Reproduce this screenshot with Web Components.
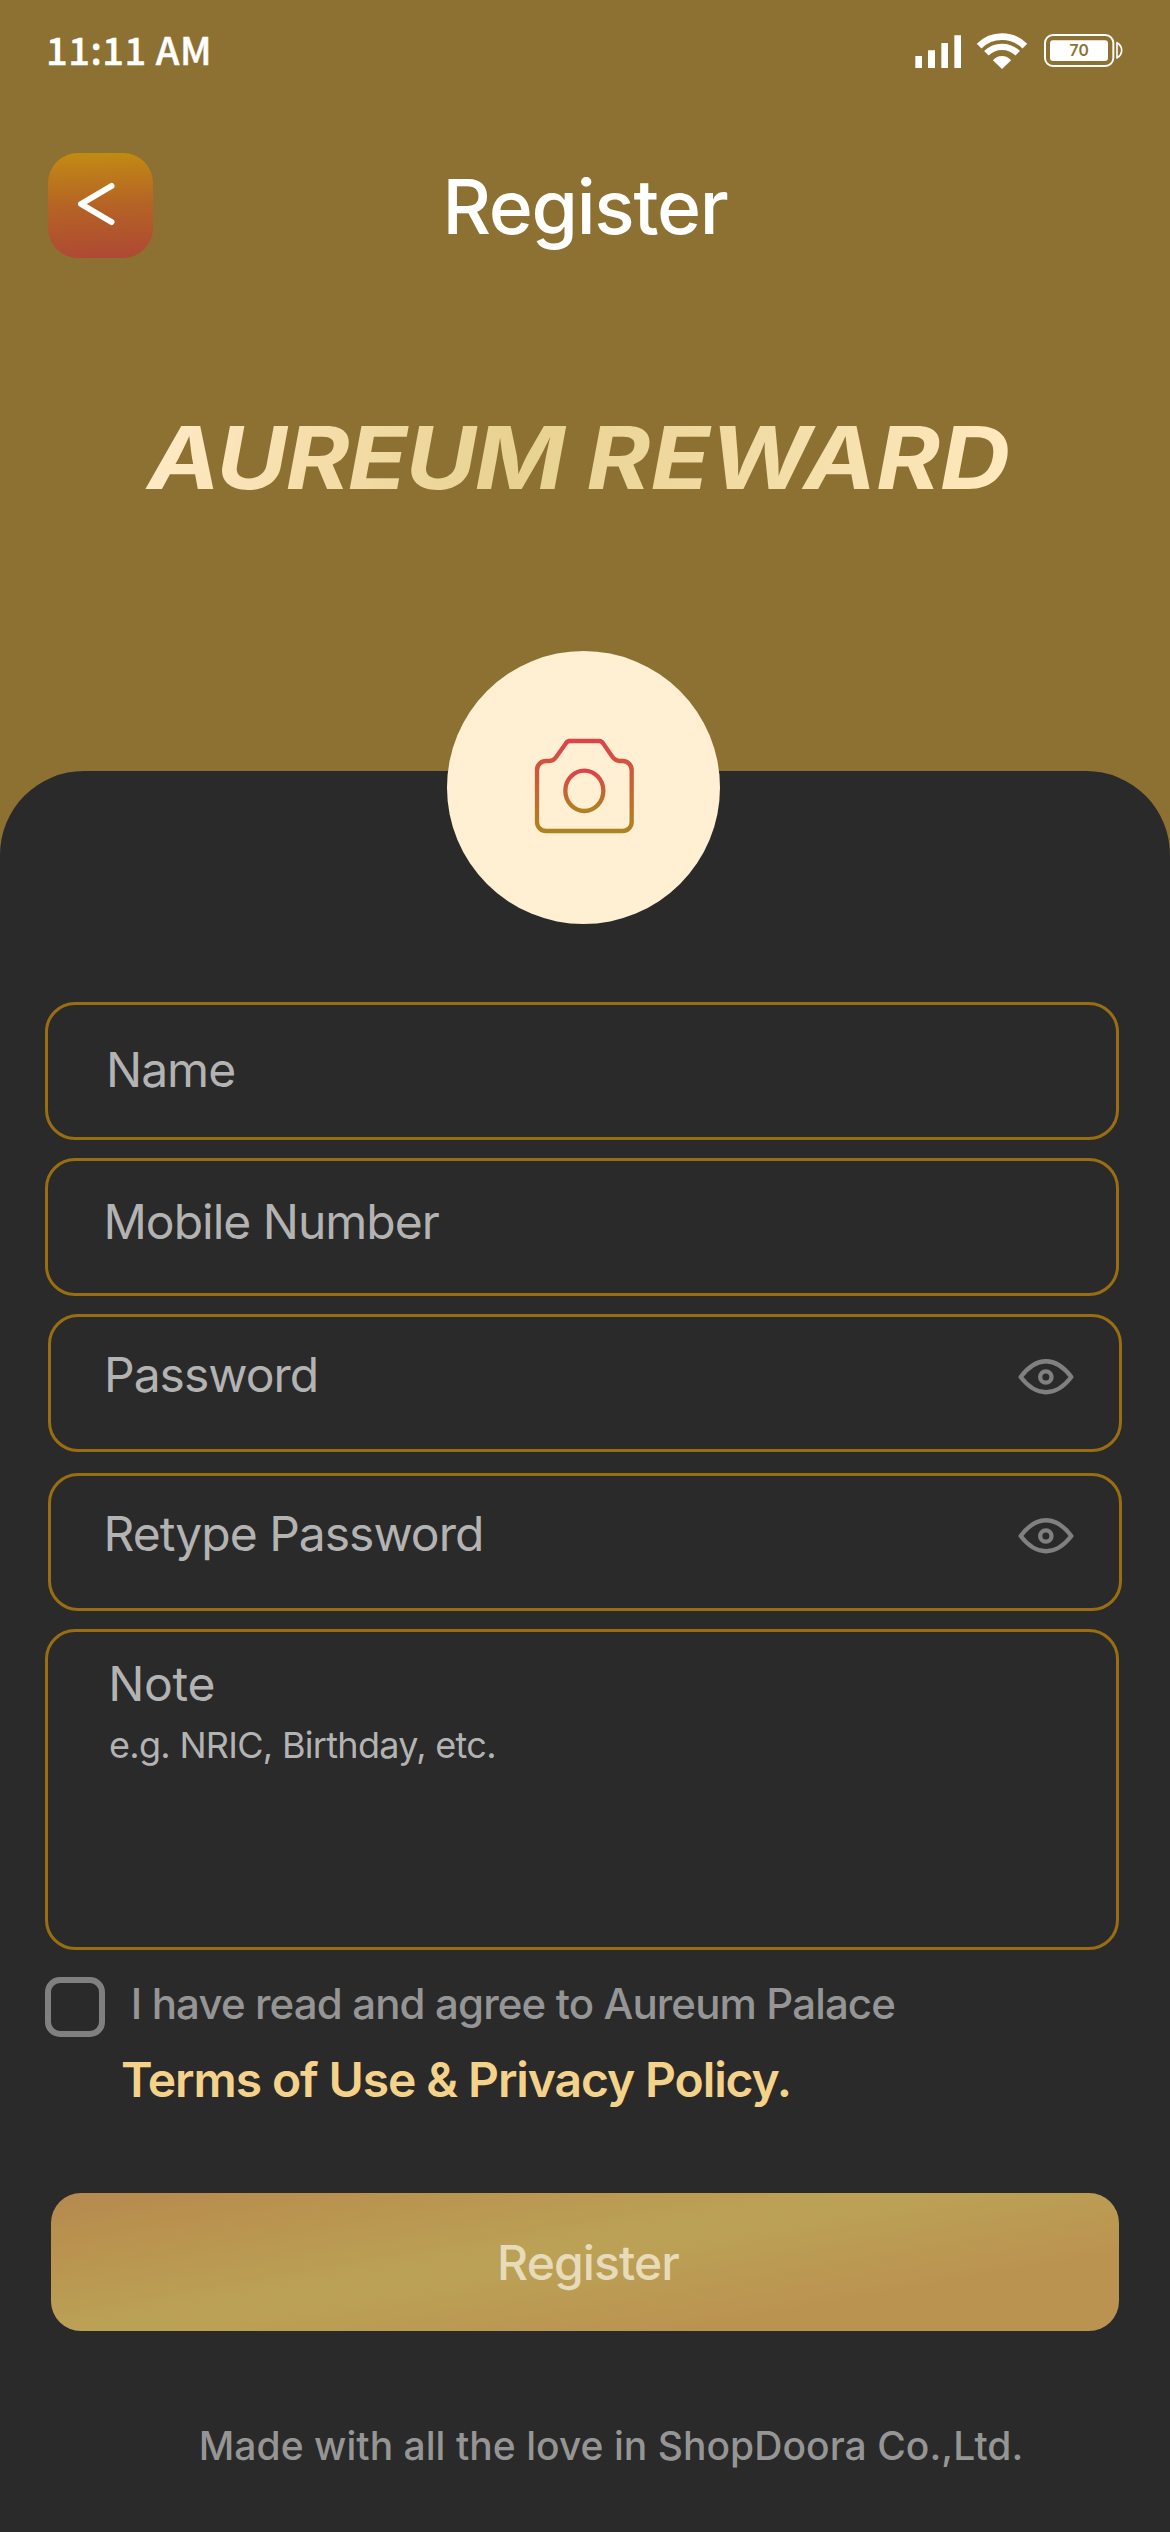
<!DOCTYPE html>
<html lang="en">
<head>
<meta charset="utf-8">
<title>Register</title>
<style>
  html, body { margin: 0; }
  body { background: #8c7132; font-family: Inter, "Liberation Sans", sans-serif; }
</style>
</head>
<body>
<register-screen></register-screen>

<template id="status-bar">
  <style>
    :host { display: flex; justify-content: space-between; align-items: flex-start; height: 90px; box-sizing: border-box; padding: 10px 0 0 46px; color: #fff; }
    .time { margin-top: 20.4px; font: 500 38px/38px "Noto Sans CJK SC", "Noto Sans", sans-serif; -webkit-text-stroke: .5px #fff; letter-spacing: .55px; white-space: nowrap; }
    svg { display: block; width: 290px; height: 80px; }
  </style>
  <span class="time">11:11 AM</span>
  <svg viewBox="0 0 870 240" fill="#fff">
    <path d="M106 138h20v36h-20zM144 121h21v53h-21zM184 99h20v75h-20zM223 76h20v98h-20z"/>
    <g fill="none" stroke="#fff">
      <path stroke-width="20" d="M297.400 108.400A97 97 0 0 1 434.600 108.400"/>
      <path stroke-width="19" d="M319 130A66.500 66.500 0 0 1 413 130"/>
      <rect x="495" y="75" width="205" height="93" rx="24" stroke-width="6"/>
      <path stroke-width="5" stroke-linejoin="round" d="M711 98Q725 106 725 121Q725 136 711 144Z"/>
    </g>
    <path d="M366 177L338.500 151Q350 138 366 138T393.500 151Z"/>
    <rect x="510" y="91" width="174" height="62" rx="9"/>
    <text x="597.500" y="138" font-family="Inter, sans-serif" font-size="47" font-weight="600" text-anchor="middle" fill="#8c7132">70</text>
  </svg>
</template>

<template id="back-button">
  <style>
    :host { display: block; width: 105px; height: 105px; border-radius: 30px; background: linear-gradient(178deg, #c28c13 0%, #b56325 50%, #ae4834 100%); }
    svg { display: block; }
  </style>
  <svg width="105" height="105" viewBox="0 0 105 105"><path d="M63.500 33L33 51L63.500 69" fill="none" stroke="#fff" stroke-width="6" stroke-linecap="round" stroke-linejoin="round"/></svg>
</template>

<template id="page-header">
  <style>
    :host { display: grid; grid-template-columns: 105px 1fr 105px; align-items: start; padding: 63px 48px 0; }
    h1 { margin: 16px 0 0; text-align: center; color: #fff; font-size: 75px; line-height: 75px; font-weight: 500; letter-spacing: -1.3px; }
  </style>
  <slot name="back"></slot>
  <h1><slot></slot></h1>
</template>

<template id="brand-mark">
  <style>
    :host { display: block; padding-left: 137px; margin-top: 156px; height: 87px; }
    .word { display: inline-block; padding: 0 12px; white-space: nowrap; transform: scaleX(1.119); transform-origin: 0 0; margin-left: -3px;
      font-size: 86.800px; line-height: 87px; font-style: italic; font-weight: 700; color: transparent;
      background: linear-gradient(98deg, #ffeac6 2%, #f6deab 20%, #e8d291 43%, #f0daa1 65%, #ffe9be 98%); -webkit-background-clip: text; background-clip: text; }
    .tight { letter-spacing: -1.550px; }
  </style>
  <span class="word"><span class="tight">AUREUM</span> REWARD</span>
</template>

<template id="photo-picker">
  <style>
    :host { display: grid; place-items: center; width: 273px; height: 273px; border-radius: 50%; background: #fff0d3; margin: -120px 0 0 447px; }
    svg { display: block; width: 273px; height: 273px; }
  </style>
  <svg viewBox="81 63 819 819" fill="none" stroke-width="13">
    <defs>
      <linearGradient id="shell" gradientUnits="userSpaceOnUse" x1="0" y1="333" x2="0" y2="590"><stop stop-color="#de424a"/><stop offset="1" stop-color="#b08122"/></linearGradient>
      <linearGradient id="lens" gradientUnits="userSpaceOnUse" x1="0" y1="425" x2="0" y2="540"><stop stop-color="#de424a"/><stop offset="1" stop-color="#b08122"/></linearGradient>
    </defs>
    <path stroke="url(#shell)" d="M378 393H388Q400 393 408 382L437 341Q442 333 448 333H538Q545 333 550 341L576 379Q586 393 600 393H608A27 27 0 0 1 635 420V576A27 27 0 0 1 608 603H378A27 27 0 0 1 351 576V420A27 27 0 0 1 378 393Z"/>
    <ellipse stroke="url(#lens)" cx="493" cy="482.500" rx="57" ry="60.500"/>
  </svg>
</template>

<template id="eye-icon">
  <style>:host { display: block; width: 56px; height: 36px; } svg { display: block; }</style>
  <svg width="56" height="36" viewBox="0 0 168 108" fill="none" stroke="#808080" stroke-width="13">
    <path stroke-linejoin="round" d="M8 54C55-9 113-9 160 54C113 115 55 115 8 54Z"/>
    <circle cx="83.500" cy="54" r="17"/>
  </svg>
</template>

<template id="form-field">
  <style>
    :host { display: flex; justify-content: space-between; align-items: flex-start; box-sizing: border-box; width: 1074px; height: 138px;
      border: 3px solid #996e12; border-radius: 30px; padding: var(--top, 33.5px) 45.500px 0 var(--left, 53px); color: #b3b3b3; }
    .text { display: flex; flex-direction: column; gap: 19.200px; font-size: 48px; line-height: 48px; letter-spacing: var(--track, -1px); white-space: nowrap; }
    ::slotted([slot=hint]) { font-size: 36px; line-height: 36px; letter-spacing: -.7px; margin-left: .7px; }
    ::slotted([slot=icon]) { margin-top: 8.700px; }
  </style>
  <div class="text"><span><slot></slot></span><slot name="hint"></slot></div>
  <slot name="icon"></slot>
</template>

<template id="agree-row">
  <style>
    :host { display: flex; gap: 16px; }
    .box { flex: none; box-sizing: border-box; width: 60px; height: 60px; border: 6px solid #808080; border-radius: 15px; }
    .text { display: flex; flex-direction: column; gap: 31.500px; padding-top: 5.800px; white-space: nowrap; }
    .line { padding-left: 9.800px; font-size: 42px; line-height: 42px; font-weight: 500; letter-spacing: -.87px; color: #959595; }
    .link { font-size: 48px; line-height: 48px; font-weight: 600; letter-spacing: -1.100px; color: #f5d28a; }
  </style>
  <div class="box"></div>
  <div class="text"><span class="line"><slot></slot></span><span class="link"><slot name="link"></slot></span></div>
</template>

<template id="submit-button">
  <style>
    :host { display: flex; justify-content: center; box-sizing: border-box; width: 1068px; height: 138px; padding: 45.500px 0 0 6px; border-radius: 30px;
      background: linear-gradient(170deg, #b5894f 0%, #b9924f 16%, #bba155 43%, #bba155 48%, #bb9351 76%);
      color: #e7dbba; font-size: 48px; line-height: 48px; font-weight: 500; letter-spacing: -.900px; }
  </style>
  <span><slot></slot></span>
</template>

<template id="register-screen">
  <style>
    :host { display: flex; flex-direction: column; width: 1170px; height: 2532px; overflow: hidden; background: #8c7132; }
    main { flex: 1; margin-top: 270px; background: #2a2a2a; border-radius: 84px 84px 0 0; display: flex; flex-direction: column; }
    .fields { display: flex; flex-direction: column; padding: 78px 0 0 45px; }
    .m18 { margin-top: 18px; } .m21 { margin-top: 21px; } .in { margin-left: 3px; }
    .note { height: 321px; --top: 27.5px; --left: 60.300px; --track: -.36px; }
    .name { --top: 40.500px; --left: 58px; }
    .mobile { --top: 36.500px; --left: 55.500px; }
    .retype { --left: 52.500px; }
    agree-row { margin-top: 27px; height: 60px; }
    submit-button { margin: 156px 0 0 6px; }
    footer { margin-top: 95.300px; padding-left: 198.700px; font-size: 39px; line-height: 39px; font-weight: 500; color: #959595; white-space: nowrap; letter-spacing: .04px; }
  </style>
  <status-bar></status-bar>
  <page-header><back-button slot="back"></back-button>Register</page-header>
  <brand-mark></brand-mark>
  <main>
    <photo-picker></photo-picker>
    <div class="fields">
      <form-field class="name">Name</form-field>
      <form-field class="mobile m18">Mobile Number</form-field>
      <form-field class="m18 in">Password<eye-icon slot="icon"></eye-icon></form-field>
      <form-field class="m21 in retype">Retype Password<eye-icon slot="icon"></eye-icon></form-field>
      <form-field class="m18 note">Note<span slot="hint">e.g. NRIC, Birthday, etc.</span></form-field>
      <agree-row>I have read and agree to Aureum Palace<span slot="link">Terms of Use &amp; Privacy Policy.</span></agree-row>
      <submit-button>Register</submit-button>
    </div>
    <footer>Made with all the love in ShopDoora Co.,Ltd.</footer>
  </main>
</template>

<script>
for (const template of document.querySelectorAll('template')) {
  customElements.define(template.id, class extends HTMLElement {
    constructor() {
      super();
      this.attachShadow({ mode: 'open' }).append(template.content.cloneNode(true));
    }
  });
}
</script>
</body>
</html>
